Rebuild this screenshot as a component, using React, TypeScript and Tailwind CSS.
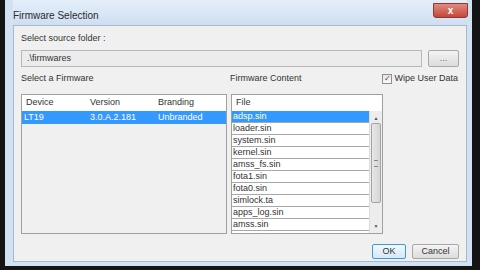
import React from "react";

const files = [
  "adsp.sin",
  "loader.sin",
  "system.sin",
  "kernel.sin",
  "amss_fs.sin",
  "fota1.sin",
  "fota0.sin",
  "simlock.ta",
  "apps_log.sin",
  "amss.sin",
];

export default function App() {
  return (
    <div
      className="flex h-[270px] w-[480px] bg-[#141414] pl-[5px] pr-[8px] pb-[4px] text-[9px] text-[#333]"
      style={{ fontFamily: '"Liberation Sans", Arial, sans-serif' }}
    >
      <div className="flex flex-1 flex-col bg-[#d3e2f2] pl-[8px] pr-[5px] pb-[4px]">
        {/* title bar */}
        <div className="flex h-[25px] items-start bg-gradient-to-b from-[#e4eefa] to-[#cfdff1]">
          <span className="mt-[8px] text-[10px] text-[#2a2a2a]">Firmware Selection</span>
          <div className="ml-auto mt-[3px] mr-[-1px] flex h-[15px] w-[35px] items-center justify-center rounded-b-[3px] border border-[#8a3a32] bg-gradient-to-b from-[#e08a80] to-[#c4463a] text-[10px] font-bold text-white">
            x
          </div>
        </div>

        {/* client */}
        <div className="flex flex-1 flex-col border border-[#a9b9cc] bg-[#f0f0f0] px-[7px] pt-[7px]">
          <div className="h-[11px] leading-[11px]">Select source folder :</div>
          <div className="mt-[6px] flex h-[17px] gap-[6px]">
            <div className="flex flex-1 items-center border border-[#b8b8b8] bg-[#ececec] pl-[5px]">.\firmwares</div>
            <div className="flex w-[31px] items-center justify-center rounded-[2px] border border-[#a8a8a8] bg-gradient-to-b from-[#f4f4f4] to-[#dcdcdc] text-[#666]">
              ...
            </div>
          </div>

          <div className="mt-[6px] flex h-[11px] items-center">
            <span className="w-[209px]">Select a Firmware</span>
            <span>Firmware Content</span>
            <span className="ml-auto mr-[1px] flex items-center gap-[2px]">
              <span className="flex h-[10px] w-[10px] items-center justify-center border border-[#8f8f8f] bg-gradient-to-b from-[#e6e6e6] to-[#fafafa] text-[8px] leading-none text-[#4a4a4a]">
                ✓
              </span>
              Wipe User Data
            </span>
          </div>

          <div className="mt-[10px] flex h-[140px] gap-[4px]">
            {/* firmware table */}
            <div className="flex w-[206px] flex-col border border-[#a0a0a0] bg-[#f0f0f0]">
              <div className="flex h-[16px] items-center bg-white">
                <span className="w-[68px] pl-[4px]">Device</span>
                <span className="w-[68px]">Version</span>
                <span>Branding</span>
              </div>
              <div className="flex h-[13px] items-center bg-[#3399ff] text-white">
                <span className="w-[68px] pl-[2px]">LT19</span>
                <span className="w-[68px]">3.0.A.2.181</span>
                <span>Unbranded</span>
              </div>
            </div>

            {/* file list */}
            <div className="flex w-[152px] flex-col border border-[#a0a0a0] bg-white">
              <div className="flex h-[16px] items-center pl-[4px]">File</div>
              <div className="flex flex-1">
                <div className="flex flex-1 flex-col">
                  {files.map((f, i) => (
                    <div
                      key={f}
                      className={`flex h-[12px] items-center border-b border-[#a8a8a8] pl-[1px] ${
                        i === 0 ? "bg-[#3399ff] text-white" : "bg-white"
                      }`}
                    >
                      {f}
                    </div>
                  ))}
                </div>
                <div className="flex w-[13px] flex-col items-center border-l border-[#dcdcdc] bg-[#ededed]">
                  <span className="mt-[3px] text-[5px] leading-[8px] text-[#555]">▲</span>
                  <div className="mt-[1px] flex h-[80px] w-[10px] items-center justify-center rounded-[2px] border border-[#a3a3a3] bg-gradient-to-r from-[#e8e8e8] to-[#d4d4d4]">
                    <div className="h-[7px] w-[4px] border-y border-[#888]" />
                  </div>
                  <span className="mt-auto mb-[3px] text-[5px] leading-[8px] text-[#555]">▼</span>
                </div>
              </div>
            </div>
          </div>

          <div className="mt-[10px] flex justify-end gap-[6px]">
            <div className="flex h-[15px] w-[34px] items-center justify-center rounded-[2px] border border-[#3c9bd6] bg-gradient-to-b from-[#f1f8fd] to-[#d6e9f7]">
              OK
            </div>
            <div className="flex h-[15px] w-[47px] items-center justify-center rounded-[2px] border border-[#a8a8a8] bg-gradient-to-b from-[#f4f4f4] to-[#dcdcdc]">
              Cancel
            </div>
          </div>
        </div>
      </div>
    </div>
  );
}
